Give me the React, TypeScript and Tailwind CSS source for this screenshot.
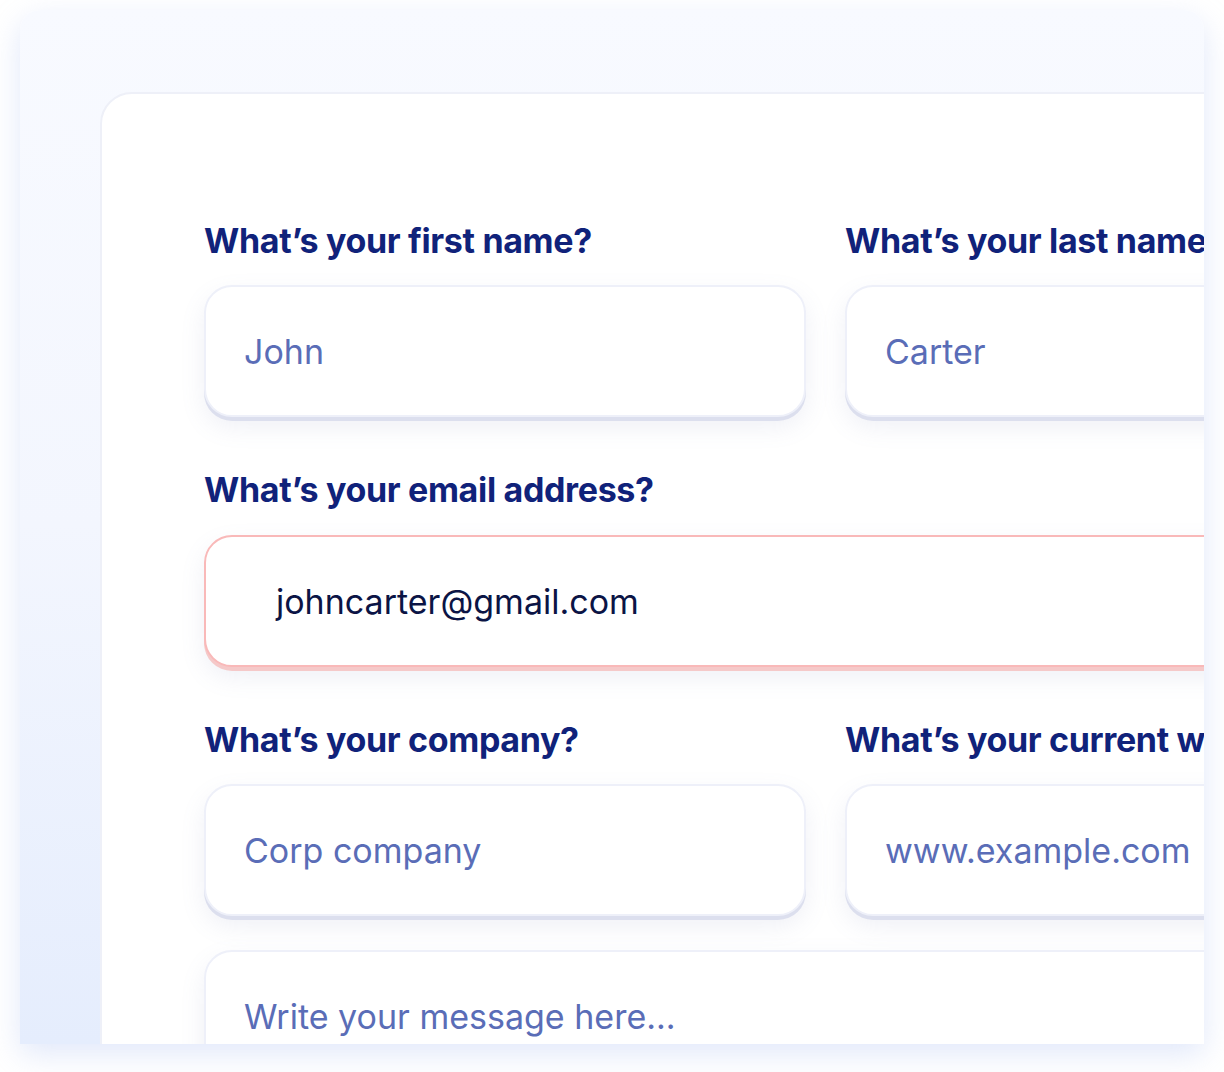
const label = 'text-[34px] font-bold leading-none tracking-[-0.01em] text-[#10227a] whitespace-nowrap'
const box =
  'flex h-[132px] items-center rounded-[28px] border-2 border-[#eef0f9] bg-white text-[34px] shadow-[0_4px_0_#dcdfee,0_10px_24px_rgba(120,130,180,0.12)]'

function Field({ title, value }: { title: string; value: string }) {
  return (
    <div>
      <p className={label}>{title}</p>
      <div className={`${box} mt-[27px] pl-[38px] text-[#5a6db7] whitespace-nowrap`}>{value}</div>
    </div>
  )
}

export default function App() {
  return (
    <div className="h-[1072px] w-[1224px] overflow-hidden bg-white font-['Inter',sans-serif]">
      <div className="ml-[20px] mt-[10px] h-[1034px] w-[1184px] overflow-hidden rounded-t-[20px] bg-gradient-to-b from-[#f8faff] via-[#f3f6fe] to-[#e5edfd] pl-[80px] pt-[82px] shadow-[0_10px_30px_rgba(170,190,240,0.35)]">
        <div className="h-[1100px] w-[1200px] rounded-tl-[32px] border-2 border-[#eef0f8] bg-white pl-[102px] pt-[130px]">
          <div className="grid grid-cols-[602px_602px] gap-x-[39px]">
            <Field title="What’s your first name?" value="John" />
            <Field title="What’s your last name?" value="Carter" />
          </div>

          <div className="mt-[56px] w-[1100px]">
            <p className={label}>What’s your email address?</p>
            <div className="mt-[28px] flex h-[132px] items-center rounded-[28px] border-2 border-[#f9b9b9] bg-white pl-[70px] text-[34px] text-[#0b1445] shadow-[0_4px_0_#f5c9c9,0_10px_24px_rgba(120,130,180,0.12)]">
              johncarter@gmail.com
            </div>
          </div>

          <div className="mt-[56px] grid grid-cols-[602px_602px] gap-x-[39px]">
            <Field title="What’s your company?" value="Corp company" />
            <Field title="What’s your current website?" value="www.example.com" />
          </div>

          <div className="mt-[34px] h-[200px] w-[1100px] rounded-[28px] border-2 border-[#eef0f9] bg-white pl-[38px] pt-[48px] text-[34px] leading-none text-[#5a6db7] shadow-[0_10px_24px_rgba(120,130,180,0.12)]">
            Write your message here...
          </div>
        </div>
      </div>
    </div>
  )
}
